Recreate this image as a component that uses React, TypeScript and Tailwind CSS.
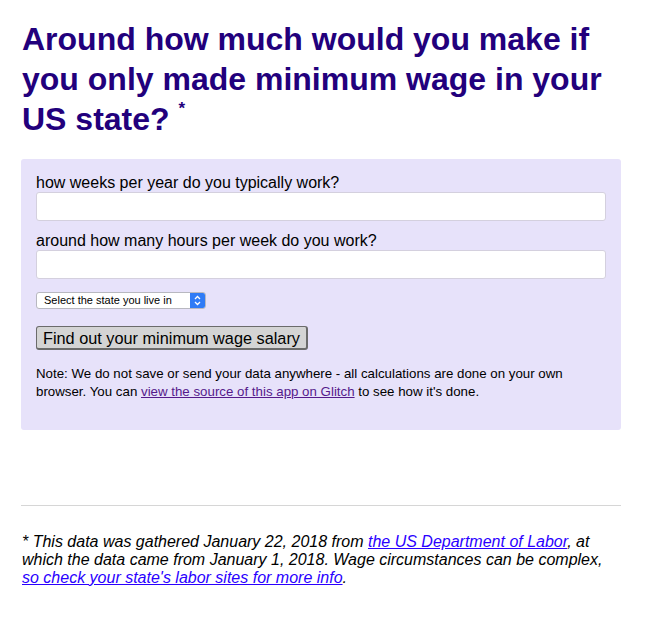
export default function App() {
  return (
    <div className="min-h-[644px] bg-white font-['Liberation_Sans',Arial,sans-serif] text-black">
      <div className="w-[600px] ml-[21px] pt-[19px]">
        <h1 className="text-[32px] leading-[40px] font-bold text-[#22007c] pl-[1px]">
          Around how much would you make if you only made minimum wage in your US state?{" "}
          <sup className="text-[17px] relative top-[-16px]">*</sup>
        </h1>
        <div className="mt-[20px] h-[271px] rounded-[3px] bg-[#e7e2fa] pt-[15px] pl-[15px] pr-[15px]">
          <label className="block text-[16px] leading-[18px]">how weeks per year do you typically work?</label>
          <input className="block w-[570px] h-[29px] bg-white border border-[#d4d0de] rounded-[3px]" />
          <label className="block text-[16px] leading-[18px] mt-[11px]">around how many hours per week do you work?</label>
          <input className="block w-[570px] h-[29px] bg-white border border-[#d4d0de] rounded-[3px]" />
          <div className="mt-[13px] flex h-[17px] w-[170px] rounded-[3px] border border-[#b8b8c0] bg-white overflow-hidden">
            <span className="flex-1 pl-[7px] text-[11px] leading-[15px] text-black">Select the state you live in</span>
            <span className="w-[15px] bg-[#2f7bf6] flex items-center justify-center">
              <svg width="7" height="11" viewBox="0 0 7 11" fill="none" stroke="white" strokeWidth="1.3">
                <path d="M1 4 L3.5 1.5 L6 4" />
                <path d="M1 7 L3.5 9.5 L6 7" />
              </svg>
            </span>
          </div>
          <button className="mt-[17px] block h-[24px] w-[272px] rounded-[3px] border border-[#6b6b6b] border-b-2 border-r-2 bg-[#d4d4d4] text-[16.3px] leading-[20px] text-black">
            Find out your minimum wage salary
          </button>
          <p className="mt-[15px] text-[13.3px] leading-[18px]">
            Note: We do not save or send your data anywhere - all calculations are done on your own browser. You can{" "}
            <a className="underline text-[#551a8b]" href="#">view the source of this app on Glitch</a> to see how it's done.
          </p>
        </div>
        <div className="mt-[75px] h-px bg-[#d6d6d6]" />
        <p className="mt-[27px] italic text-[16px] leading-[18px] pl-[1px]">
          * This data was gathered January 22, 2018 from{" "}
          <a className="underline text-[#2a00ff]" href="#">the US Department of Labor</a>, at which the data came from January 1, 2018. Wage circumstances can be complex,{" "}
          <a className="underline text-[#2a00ff]" href="#">so check your state's labor sites for more info</a>.
        </p>
      </div>
    </div>
  );
}
